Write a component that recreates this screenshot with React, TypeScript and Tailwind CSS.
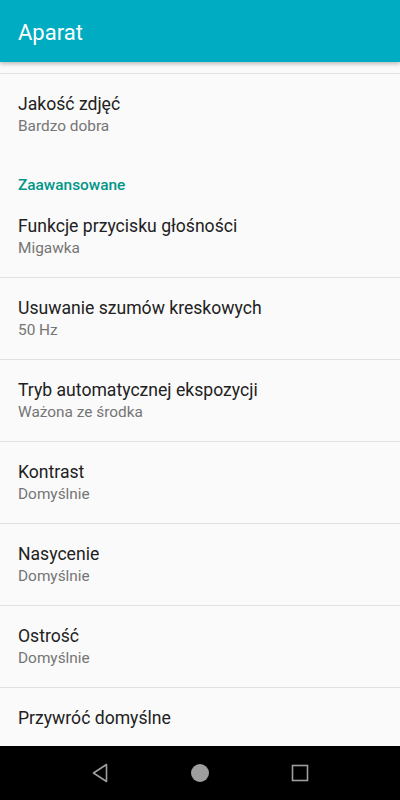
import React from "react";

// camera settings screen (android preferences look)
const rows = [
  { title: "Funkcje przycisku głośności", summary: "Migawka" },
  { title: "Usuwanie szumów kreskowych", summary: "50 Hz" },
  { title: "Tryb automatycznej ekspozycji", summary: "Ważona ze środka" },
  { title: "Kontrast", summary: "Domyślnie" },
  { title: "Nasycenie", summary: "Domyślnie" },
  { title: "Ostrość", summary: "Domyślnie" },
];

function Pref({ title, summary }: { title: string; summary?: string }) {
  return (
    <div className="px-[18px] pt-[18px] pb-[19px]">
      <div className="text-[17.6px] leading-[24px] text-[#212121]">{title}</div>
      {summary && <div className="text-[15.4px] leading-[20px] text-[#757575]">{summary}</div>}
    </div>
  );
}

export default function App() {
  return (
    <div
      className="w-[400px] h-[800px] flex flex-col bg-[#fafafa] overflow-hidden"
      style={{ fontFamily: "Roboto, 'Noto Sans', sans-serif" }}
    >
      {/* toolbar */}
      <div className="h-[62px] shrink-0 bg-[#00acc1] flex items-center px-[18px] pt-[2px] shadow-[0_2px_4px_rgba(0,0,0,0.25)] z-10">
        <span className="text-white text-[22px]">Aparat</span>
      </div>

      <div className="flex-1 overflow-hidden">
        <div className="h-[11px]" />
        <div className="h-px bg-[#e0e0e0]" />
        <div className="h-[80px]">
          <Pref title="Jakość zdjęć" summary="Bardzo dobra" />
        </div>

        <div className="px-[18px] pt-[21px] h-[42px] text-[15.4px] leading-[20px] font-medium text-[#009688]">
          Zaawansowane
        </div>

        {rows.map((r) => (
          <div key={r.title}>
            <Pref title={r.title} summary={r.summary} />
            <div className="h-px bg-[#e0e0e0]" />
          </div>
        ))}
        <Pref title="Przywróć domyślne" />
      </div>

      {/* nav bar */}
      <div className="h-[54px] shrink-0 bg-black flex items-center justify-center gap-[76px]">
        <svg width="24" height="24" viewBox="0 0 24 24">
          <path d="M18.5 3.5 L5.5 12 L18.5 20.5 Z" fill="none" stroke="#9e9e9e" strokeWidth="1.6" strokeLinejoin="round" />
        </svg>
        <svg width="24" height="24" viewBox="0 0 24 24">
          <circle cx="12" cy="12" r="9" fill="#9e9e9e" />
        </svg>
        <svg width="24" height="24" viewBox="0 0 24 24">
          <rect x="4.5" y="4.5" width="15" height="15" fill="none" stroke="#9e9e9e" strokeWidth="1.6" />
        </svg>
      </div>
    </div>
  );
}
